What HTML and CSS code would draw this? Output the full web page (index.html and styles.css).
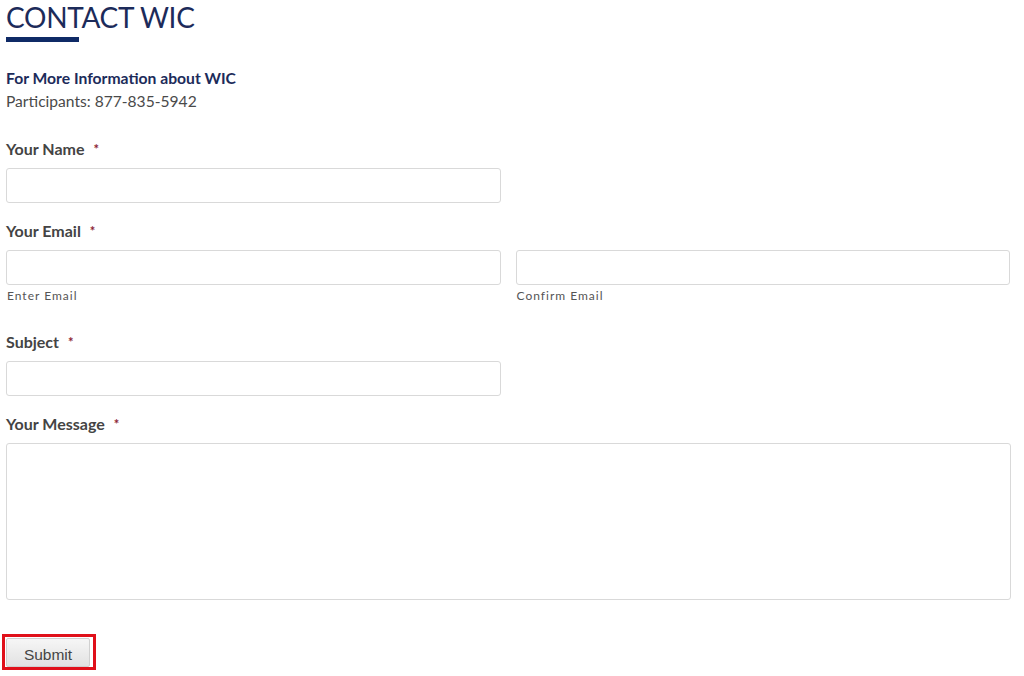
FILE: index.html
```html
<!DOCTYPE html>
<html>
<head>
<meta charset="utf-8">
<link rel="stylesheet" href="styles.css">
</head>
<body>
<div class="page">
  <h1 class="title">CONTACT WIC</h1>
  <div class="title-bar"></div>
  <div class="info">
    <div class="info-head">For More Information about WIC</div>
    <div class="info-text">Participants: 877-835-5942</div>
  </div>
  <form class="form">
    <div class="field">
      <label class="label">Your Name <span class="req">*</span></label>
      <input class="input half" type="text">
    </div>
    <div class="field">
      <label class="label">Your Email <span class="req">*</span></label>
      <div class="row">
        <div class="col">
          <input class="input" type="text">
          <div class="sub">Enter Email</div>
        </div>
        <div class="col">
          <input class="input" type="text">
          <div class="sub">Confirm Email</div>
        </div>
      </div>
    </div>
    <div class="field">
      <label class="label">Subject <span class="req">*</span></label>
      <input class="input half" type="text">
    </div>
    <div class="field">
      <label class="label">Your Message <span class="req">*</span></label>
      <textarea class="textarea"></textarea>
    </div>
    <div class="submit-wrap">
      <button class="submit" type="button">Submit</button>
    </div>
  </form>
</div>
</body>
</html>
```
FILE: styles.css
```css
html, body {
  margin: 0;
  padding: 0;
  background: #fff;
}
body {
  font-family: Lato, "Open Sans", sans-serif;
  color: #444;
}
.page {
  padding: 0 13px 0 6px;
  width: 1005px;
}
.title {
  margin: 0;
  padding-top: 1px;
  font-size: 28px;
  font-weight: 400;
  line-height: 32px;
  color: #1c2b5a;
  letter-spacing: -0.3px;
}
.title-bar {
  width: 73px;
  height: 5px;
  background: #0f2a66;
  margin-top: 4px;
}
.info {
  margin-top: 25px;
}
.info-head {
  font-size: 15.7px;
  font-weight: 700;
  color: #1c2b5a;
  line-height: 22px;
}
.info-text {
  font-size: 15.6px;
  color: #4a4a4a;
  line-height: 25px;
}
.form {
  margin-top: 24px;
}
.field {
  margin-bottom: 17px;
}
.label {
  display: block;
  font-size: 16px;
  font-weight: 700;
  color: #444;
  line-height: 22px;
  margin-bottom: 8px;
}
.req {
  color: #8b2333;
  font-size: 13px;
  margin-left: 5px;
  vertical-align: top;
}
.input {
  display: block;
  box-sizing: border-box;
  width: 100%;
  height: 35px;
  border: 1px solid #d9d9d9;
  border-radius: 3px;
  margin: 0;
  background: #fff;
}
.input.half {
  width: 495px;
}
.row {
  display: flex;
  gap: 15px;
  width: 1004px;
}
.col {
  flex: 1;
}
.sub {
  font-size: 12px;
  letter-spacing: 1px;
  color: #555;
  margin-top: 4px;
  line-height: 14px;
  padding-left: 1px;
  margin-bottom: 11px;
}
.textarea {
  display: block;
  box-sizing: border-box;
  width: 1005px;
  height: 157px;
  border: 1px solid #d9d9d9;
  border-radius: 3px;
  margin: 0;
  resize: none;
}
.submit-wrap {
  margin-top: 17px;
  margin-left: -4px;
  display: inline-block;
  border: 3px solid #e0101a;
  padding: 1px 3px 0 1px;
}
.submit {
  display: block;
  width: 84px;
  height: 29px;
  font-family: "Liberation Sans", Arial, sans-serif;
  font-size: 15.5px;
  color: #444;
  background: linear-gradient(#f6f6f6, #e2e2e2);
  border: 1px solid #d0d0d0;
  border-radius: 2px;
  padding: 4px 0 0 0;
  line-height: 22px;
}
```
